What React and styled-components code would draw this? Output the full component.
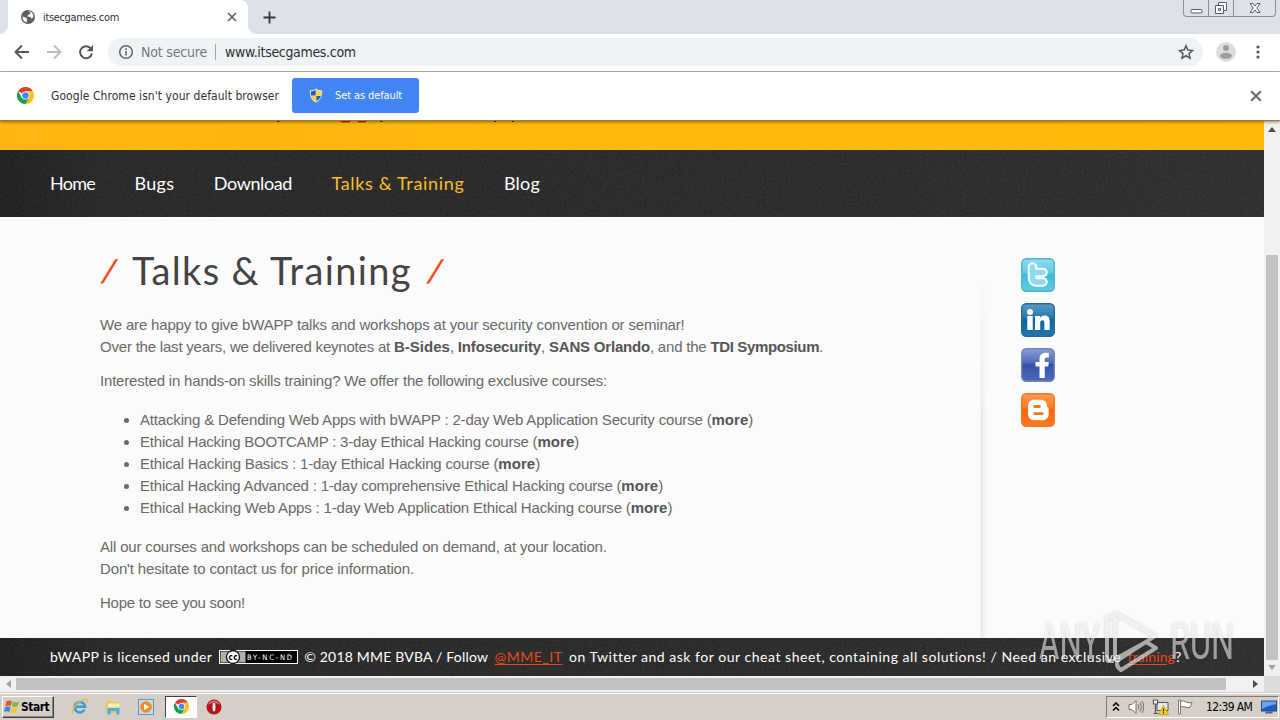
import React from 'react';
import styled, { createGlobalStyle } from 'styled-components';

const Global = createGlobalStyle`
  * { box-sizing: border-box; }
  body { margin: 0; overflow: hidden; font-family: 'Liberation Sans', sans-serif; }
  svg { display: block; flex: none; }
`;

const ui = `'DejaVu Sans Condensed', 'DejaVu Sans', sans-serif`;
const hand = `Lato, sans-serif`;

const Desktop = styled.div`
  width: 1280px;
  height: 720px;
  display: flex;
  flex-direction: column;
  overflow: hidden;
  background: #fff;
`;

/* ---------- browser chrome ---------- */
const TabStrip = styled.div`
  height: 34px;
  flex: none;
  display: flex;
  align-items: flex-start;
  background: #dee1e8;
  padding-left: 8px;
`;
const Tab = styled.div`
  position: relative;
  width: 240px;
  height: 34px;
  padding: 0 11px 0 13px;
  display: flex;
  align-items: center;
  background: #fff;
  border-radius: 0 8px 0 0;
  &::before, &::after {
    content: '';
    position: absolute;
    bottom: 0;
    width: 8px;
    height: 8px;
  }
  &::before { left: -8px; background: radial-gradient(circle at 0 0, transparent 7.5px, #fff 8px); }
  &::after { right: -8px; background: radial-gradient(circle at 100% 0, transparent 7.5px, #fff 8px); }
`;
const UiText = styled.span`
  font-family: ${ui};
  font-size: ${p => p.$size}px;
  letter-spacing: ${p => p.$track || 0}px;
  color: ${p => p.$color || '#333'};
  font-weight: ${p => (p.$bold ? 700 : 400)};
  white-space: nowrap;
`;
const TabTitle = styled(UiText)`
  flex: 1;
  margin-left: 8px;
`;
const NewTab = styled.div`
  height: 34px;
  margin-left: 15px;
  display: flex;
  align-items: center;
`;
const WindowButtons = styled.div`
  display: flex;
  height: 17px;
  margin-left: auto;
  margin-right: 4px;
  border: 1px solid #8b8f9b;
  border-top: 0;
  border-radius: 0 0 4px 4px;
`;
const WindowButton = styled.div`
  width: ${p => p.$w}px;
  display: flex;
  align-items: center;
  justify-content: center;
  & + & { border-left: 1px solid #8b8f9b; }
`;
const Toolbar = styled.div`
  height: 38px;
  flex: none;
  display: flex;
  align-items: center;
  padding: 0 14px 2px;
  border-bottom: 1px solid #b3b5b5;
`;
const NavIcons = styled.div`
  width: 94px;
  display: flex;
  gap: 16px;
`;
const Omnibox = styled.div`
  width: 1095px;
  height: 28px;
  border-radius: 14px;
  background: #f0f3f6;
  display: flex;
  align-items: center;
  padding: 0 9px 0 10px;
`;
const Status = styled.div`
  margin-left: 7px;
  padding-right: 8px;
  width: 75px;
  height: 16px;
  line-height: 15px;
  border-right: 1px solid #a0a3a7;
  margin-right: 9px;
`;
const Spacer = styled.div`flex: 1;`;
const Actions = styled.div`
  display: flex;
  align-items: center;
  gap: 18px;
  margin-left: 13px;
`;
const InfoBar = styled.div`
  position: relative;
  z-index: 1;
  height: 49px;
  flex: none;
  display: flex;
  align-items: center;
  padding: 0 18px 1px 17px;
  background: #fff;
  border-bottom: 1px solid #a07c2e;
  box-shadow: 0 1px 3px rgba(0, 0, 0, .45);
`;
const InfoMessage = styled(UiText)`
  width: 241px;
  margin-left: 17px;
`;
const DefaultButton = styled.div`
  width: 127px;
  height: 35px;
  border-radius: 3px;
  background: #4285f4;
  display: flex;
  align-items: center;
  padding-left: 17px;
  gap: 12px;
`;

/* ---------- web page ---------- */
const Viewport = styled.div`
  height: 571px;
  flex: none;
  display: grid;
  grid-template-columns: 1264px 16px;
  grid-template-rows: 555px 16px;
`;
const Page = styled.div`
  display: flex;
  flex-direction: column;
  overflow: hidden;
  background: #fbfbfb;
`;
const Banner = styled.div`
  height: 29px;
  flex: none;
  background: linear-gradient(90deg, #ffb612, #ffb80d 45%, #ffba0b);
  padding-left: 277px;
`;
const Dark = styled.div`
  position: relative;
  flex: none;
  display: flex;
  align-items: center;
  padding: 0 0 2px 50px;
  height: ${p => p.$h}px;
  gap: ${p => p.$gap}px;
  background: linear-gradient(90deg, #1b1b1b, #242424 8%, #262626 60%, #2b2b2b);
  font-family: ${hand};
  font-size: ${p => p.$size}px;
  color: #fff;
  white-space: nowrap;
`;
const GrainLayer = styled.svg`
  position: absolute;
  inset: 0;
  width: 100%;
  height: 100%;
  opacity: .1;
`;
const HandText = styled.span`
  position: relative;
  letter-spacing: ${p => p.$track}px;
  color: ${p => p.$color || '#fff'};
`;
const HandLink = styled(HandText)`
  text-decoration: underline;
  text-underline-offset: 2px;
`;
const Main = styled.div`
  height: 421px;
  flex: none;
  display: flex;
  padding-left: 100px;
`;
const Article = styled.div`
  width: 880px;
  padding-top: 26px;
  font-size: 15px;
  line-height: 22px;
  color: #6a6a6a;
`;
const Title = styled.h1`
  margin: 0 0 17px;
  height: 54px;
  display: flex;
  align-items: center;
  font: 400 38px/54px ${hand};
  letter-spacing: 1.36px;
  color: #444;
`;
const Slash = styled.span`
  width: 32px;
  font-size: 31px;
  line-height: 50px;
  letter-spacing: 0;
  color: #f8410c;
  transform: skewX(-12deg);
  transform-origin: 0 75%;
  -webkit-text-stroke: .4px #f8410c;
`;
const EndSlash = styled(Slash)`margin-left: 14px;`;
const Paragraph = styled.div`
  margin-bottom: 12px;
`;
const Line = styled.div`
  letter-spacing: ${p => p.$track}px;
  white-space: nowrap;
`;
const Strong = styled.b`
  color: #555;
  letter-spacing: ${p => p.$track || 0}px;
`;
const Courses = styled.ul`
  margin: 17px 0;
  padding-left: 40px;
`;
const Course = styled.li`
  letter-spacing: ${p => p.$track}px;
  white-space: nowrap;
`;
const Divider = styled.div`
  width: 9px;
  margin-top: 60px;
  background: linear-gradient(90deg, #fbfbfb, #e7e7e7 12%, #f4f4f4 50%, #fbfbfb);
  mask-image: linear-gradient(transparent, #000 40%);
`;
const Social = styled.div`
  margin-left: 32px;
  padding-top: 41px;
  display: flex;
  flex-direction: column;
  gap: 11px;
`;

/* ---------- scrollbars ---------- */
const VScroll = styled.div`
  background: #f1f1f1;
  display: flex;
  flex-direction: column;
  align-items: center;
  justify-content: space-between;
  padding: 6px 0 6px;
`;
const VThumb = styled.div`
  width: 12px;
  height: 405px;
  margin-top: auto;
  margin-bottom: 5px;
  background: #c1c1c1;
`;
const HScroll = styled.div`
  background: #f1f1f1;
  display: flex;
  align-items: center;
  padding: 0 6px;
  justify-content: space-between;
`;
const HThumb = styled.div`
  width: 1210px;
  height: 12px;
  margin-left: 5px;
  margin-right: auto;
  background: #c1c1c1;
`;
const Corner = styled.div`background: #dcdcdc;`;

/* ---------- taskbar ---------- */
const Taskbar = styled.div`
  flex: 1;
  display: flex;
  align-items: center;
  padding: 1px 1px 1px 2px;
  background: #d5cfc7;
  border-top: 1px solid #d5cfc7;
  box-shadow: inset 0 1px 0 #fff;
`;
const StartButton = styled.div`
  width: 52px;
  height: 22px;
  display: flex;
  align-items: center;
  gap: 1px;
  padding-left: 1px;
  border: 1px solid;
  border-color: #fff #404040 #404040 #fff;
  box-shadow: inset -1px -1px 0 #8a857d;
`;
const QuickLaunch = styled.div`
  display: flex;
  align-items: center;
  gap: 17px;
  margin-left: 17px;
`;
const ActiveTask = styled.div`
  width: 32px;
  height: 22px;
  margin: 0 9px 0 11px;
  display: flex;
  align-items: center;
  justify-content: center;
  background: #fff;
  border: 1px solid;
  border-color: #404040 #fff #fff #404040;
`;
const Tray = styled.div`
  width: 173px;
  height: 22px;
  margin-left: auto;
  display: flex;
  align-items: center;
  padding: 0 1px 0 5px;
  border: 1px solid;
  border-color: #807c76 #fff #fff #807c76;
`;
const TrayIcons = styled.div`
  display: flex;
  align-items: center;
  gap: 8px;
  width: 94px;
`;
const Watermark = styled.svg`
  position: absolute;
  left: 1034px;
  top: 603px;
  z-index: 3;
  filter: drop-shadow(0 0 1.5px rgba(0, 0, 0, .3));
`;

const Grain = ({ id }) => (
  <GrainLayer aria-hidden="true">
    <filter id={id}>
      <feTurbulence type="fractalNoise" baseFrequency="0.45" numOctaves="2" />
      <feColorMatrix type="saturate" values="0" />
    </filter>
    <rect width="100%" height="100%" filter={`url(#${id})`} />
  </GrainLayer>
);

const Cross = ({ size = 10, color = '#5f6368' }) => (
  <svg width={size} height={size} viewBox="0 0 10 10" stroke={color} strokeWidth="1.7">
    <path d="M1 1l8 8M9 1L1 9" />
  </svg>
);

const ChromeLogo = ({ size }) => (
  <svg width={size} height={size} viewBox="0 0 48 48">
    <path d="M24 24L3.2 12A24 24 0 0 1 44.8 12H24z" fill="#e33b2e" />
    <path d="M44.8 12A24 24 0 0 1 24 48L34.4 30 24 12z" fill="#fbc116" />
    <path d="M3.2 12A24 24 0 0 0 24 48L34.4 30H13.6z" fill="#1a9c50" />
    <circle cx="24" cy="24" r="11.5" fill="#fff" />
    <circle cx="24" cy="24" r="9" fill="#4386f5" />
  </svg>
);

const Globe = () => (
  <svg width="14" height="14" viewBox="0 0 14 14">
    <circle cx="7" cy="7" r="7" fill="#5c6064" />
    <path d="M1.6 6.6l3 .8 1.500 1.600-.5 3.400A5.600 5.600 0 0 1 1.600 6.600zM6.300 1.400L9.400 2 9 4.100 7.200 4.800 6.300 6.400l3.300.5 1.200 2.200 1.200-2 .5-.6A5.600 5.600 0 0 0 8.600 1.300z" fill="#fff" />
  </svg>
);

const Shield = () => (
  <svg width="14" height="15" viewBox="0 0 14 15">
    <path d="M7 .5C5 2 3 2.200.8 2.200c0 6 1 9.600 6.200 12.200 5.200-2.600 6.200-6.200 6.200-12.200C11 2.200 9 2 7 .5z" fill="#e8e4c8" />
    <path d="M6.700 2C5 3 3.500 3.200 2 3.300V7.500h4.700z" fill="#1f5dbd" />
    <path d="M7.300 2C9 3 10.500 3.200 12 3.300V7.500H7.300z" fill="#f8d428" />
    <path d="M2.200 8h4.500v5C4.200 11.800 2.700 10 2.200 8z" fill="#f8d428" />
    <path d="M11.800 8H7.300v5c2.500-1.200 4-3 4.500-5z" fill="#1f5dbd" />
  </svg>
);

const Tile = ({ id, top, mid, bottom, edge, children }) => (
  <svg width="34" height="34" viewBox="0 0 34 34">
    <defs>
      <linearGradient id={id} x1="0" y1="0" x2="0" y2="1">
        <stop offset="0" stopColor={top} />
        <stop offset=".45" stopColor={mid} />
        <stop offset=".46" stopColor={bottom} />
        <stop offset="1" stopColor={mid} />
      </linearGradient>
    </defs>
    <rect x=".7" y=".7" width="32.600" height="32.600" rx="4.500" fill={`url(#${id})`} stroke={edge} strokeWidth="1.400" />
    {children}
  </svg>
);

const SocialLinks = () => (
  <Social>
    <Tile id="tw" top="#8fdcec" mid="#62cbe2" bottom="#3bbbdb" edge="#4fb6cb">
      <path d="M11.500 9v10.500q0 4.500 4.500 4.500h6M11.500 14.500H22" fill="none" stroke="#fff" strokeWidth="9.500" strokeLinecap="round" strokeLinejoin="round" />
      <path d="M11.500 9v10.500q0 4.500 4.500 4.500h6M11.500 14.500H22" fill="none" stroke="#8edaf0" strokeWidth="5.600" strokeLinecap="round" strokeLinejoin="round" />
    </Tile>
    <Tile id="li" top="#5d9dc4" mid="#2277ae" bottom="#0c659f" edge="#256a96">
      <g fill="#fff">
        <circle cx="9" cy="9" r="3" />
        <path d="M6.300 13h5.400V27H6.300zM14 13h5v1.900c1-1.500 2.500-2.300 4.500-2.300 3.800 0 5.200 2.300 5.200 6V27h-5.300v-7c0-1.700-.6-2.700-2-2.700-1.500 0-2.200 1.100-2.200 2.900V27H14z" />
      </g>
    </Tile>
    <Tile id="fb" top="#8c9fd6" mid="#4e68b8" bottom="#3551a8" edge="#7186c0">
      <path d="M18.500 30V18.500h-4V14h4v-2.500c0-4.500 2.200-6.700 6.300-6.700h3v4.700h-2c-1.600 0-2 .7-2 2.200V14h4l-.6 4.500h-3.400V30z" fill="#fff" />
    </Tile>
    <Tile id="bl" top="#ff9a4e" mid="#fb7a24" bottom="#fc6605" edge="#f57722">
      <path d="M13.500 6.800h6c4 0 6.500 2.500 6.500 6.200 0 1.300.7 1.500 1.200 1.800.4.300.5.700.5 1.300v4.700c0 4-2.700 6.500-6.500 6.500h-7.700C9.500 27.300 7 24.800 7 21v-7.800c0-4 2.500-6.400 6.500-6.400z" fill="#fff" />
      <path d="M13.700 13.500h4.800M13.700 20.600h7.600" stroke="#f9741b" strokeWidth="2.800" strokeLinecap="round" />
    </Tile>
  </Social>
);

const Badge = styled.svg`
  position: relative;
  font-family: ${ui};
`;
const CreativeCommons = () => (
  <Badge width="79" height="15" viewBox="0 0 79 15">
    <rect x=".5" y="1.500" width="78" height="13" fill="#000" stroke="#fff" />
    <rect x="1.500" y="2.500" width="25" height="11" fill="#aeb3a9" />
    <circle cx="14" cy="8" r="6.500" fill="#fff" stroke="#111" strokeWidth="1.300" />
    <text x="9.600" y="10.700" fontSize="8" fontWeight="700" textLength="9">cc</text>
    <text x="28" y="11" fontSize="7.500" fill="#fff" textLength="45">BY-NC-ND</text>
  </Badge>
);

const nav = [
  ['Home', -0.75],
  ['Bugs', 0.3],
  ['Download', -0.4],
  ['Talks & Training', 0.67, '#f9bd2c'],
  ['Blog', 0.2],
];

const courses = [
  ['Attacking & Defending Web Apps with bWAPP : 2-day Web Application Security course (', -0.17],
  ['Ethical Hacking BOOTCAMP : 3-day Ethical Hacking course (', -0.204],
  ['Ethical Hacking Basics : 1-day Ethical Hacking course (', -0.17],
  ['Ethical Hacking Advanced : 1-day comprehensive Ethical Hacking course (', -0.196],
  ['Ethical Hacking Web Apps : 1-day Web Application Ethical Hacking course (', -0.17],
];

function BrowserChrome() {
  return (
    <>
      <TabStrip>
        <Tab>
          <Globe />
          <TabTitle $size={11} $track={-0.35}>itsecgames.com</TabTitle>
          <Cross size={10} />
        </Tab>
        <NewTab>
          <svg width="13" height="13" viewBox="0 0 13 13" stroke="#33363b" strokeWidth="1.800"><path d="M6.500.5v12M.5 6.500h12" /></svg>
        </NewTab>
        <WindowButtons>
          <WindowButton $w={24}>
            <svg width="13" height="15" viewBox="0 0 13 15"><rect x="1" y="8.500" width="11" height="3.500" rx="1" fill="#fff" stroke="#555b68" /></svg>
          </WindowButton>
          <WindowButton $w={25}>
            <svg width="14" height="14" viewBox="0 0 14 14" fill="#fff" stroke="#555b68">
              <path d="M4.500 1.500h8v8h-8z" /><path d="M1.500 4.500h8v8h-8z" /><path d="M4.500 7.500h2v2h-2z" />
            </svg>
          </WindowButton>
          <WindowButton $w={42}>
            <svg width="12" height="12" viewBox="0 0 12 12"><path d="M1 1.500h3L6 4l2-2.500h3L7.800 6l3.200 4.500H8L6 8l-2 2.500H1L4.200 6z" fill="#fff" stroke="#555b68" /></svg>
          </WindowButton>
        </WindowButtons>
      </TabStrip>
      <Toolbar>
        <NavIcons>
          <svg width="16" height="16" viewBox="0 0 16 16" fill="none" stroke="#55595e" strokeWidth="2"><path d="M15 8H2M8 1.500L1.500 8 8 14.500" /></svg>
          <svg width="16" height="16" viewBox="0 0 16 16" fill="none" stroke="#bbbdbf" strokeWidth="1.800"><path d="M1 8h13M8 1.500L14.500 8 8 14.500" /></svg>
          <svg width="16" height="16" viewBox="0 0 16 16"><path d="M13.200 5A6 6 0 1 0 14 9.500" fill="none" stroke="#55595e" strokeWidth="2" /><path d="M15 1v6.300H8.700z" fill="#55595e" /></svg>
        </NavIcons>
        <Omnibox>
          <svg width="16" height="16" viewBox="0 0 16 16"><circle cx="8" cy="8" r="6.300" fill="none" stroke="#5f6368" strokeWidth="1.500" /><path d="M8 7v4.500M8 4.300V6" stroke="#5f6368" strokeWidth="1.600" /></svg>
          <Status><UiText $size={14} $track={-0.19} $color="#74787c">Not secure</UiText></Status>
          <UiText $size={14} $track={-0.32} $color="#2d2f32">www.itsecgames.com</UiText>
          <Spacer />
          <svg width="16" height="16" viewBox="0 0 24 24" fill="none" stroke="#55595e" strokeWidth="2.300"><path d="M12 2.800l2.800 6.400 7 .6-5.300 4.600 1.600 6.800-6.100-3.600-6.100 3.600 1.600-6.800L2.200 9.800l7-.6z" /></svg>
        </Omnibox>
        <Actions>
          <svg width="20" height="20" viewBox="0 0 20 20"><circle cx="10" cy="10" r="10" fill="#dddddf" /><circle cx="10" cy="6" r="3" fill="#9c9da0" /><ellipse cx="10" cy="13.800" rx="6" ry="3" fill="#9c9da0" /></svg>
          <svg width="8" height="16" viewBox="0 0 8 16" fill="#55595e"><circle cx="4" cy="3" r="1.600" /><circle cx="4" cy="8" r="1.600" /><circle cx="4" cy="13" r="1.600" /></svg>
        </Actions>
      </Toolbar>
      <InfoBar>
        <ChromeLogo size={17} />
        <InfoMessage $size={12} $track={0.06}>Google Chrome isn't your default browser</InfoMessage>
        <DefaultButton>
          <Shield />
          <UiText $size={11} $track={-0.11} $color="#fff">Set as default</UiText>
        </DefaultButton>
        <Spacer />
        <Cross size={12} color="#6a6a6a" />
      </InfoBar>
    </>
  );
}

function TalksPage() {
  return (
    <Page>
      <Banner>
        <svg width="240" height="3" viewBox="0 0 240 3">
          <path d="M0 0h3l-1 1H0zM103 0h3l-1 1h-2zM217 0h2v1h-2zM235 0h2v1h-2z" fill="#5b3b06" />
          <path d="M63 0h11l-2 1.500h-7zM80 0h10l-2 1.500h-6z" fill="#d42c10" />
        </svg>
      </Banner>
      <Dark $h={67} $gap={39.500} $size={18}>
        <Grain id="grain-nav" />
        {nav.map(([label, track, color]) => (
          <HandText key={label} $track={track} $color={color}>{label}</HandText>
        ))}
      </Dark>
      <Main>
        <Article>
          <Title><Slash>/</Slash>Talks &amp; Training<EndSlash>/</EndSlash></Title>
          <Paragraph>
            <Line $track={-0.17}>We are happy to give bWAPP talks and workshops at your security convention or seminar!</Line>
            <Line $track={-0.206}>
              Over the last years, we delivered keynotes at <Strong>B-Sides</Strong>, <Strong $track={-0.15}>Infosecurity</Strong>, <Strong $track={-0.2}>SANS Orlando</Strong>, and the <Strong $track={-0.36}>TDI Symposium</Strong>.
            </Line>
          </Paragraph>
          <Line $track={-0.188}>Interested in hands-on skills training? We offer the following exclusive courses:</Line>
          <Courses>
            {courses.map(([text, track]) => (
              <Course key={text} $track={track}>{text}<Strong $track={0.05}>more</Strong>)</Course>
            ))}
          </Courses>
          <Paragraph>
            <Line $track={-0.17}>All our courses and workshops can be scheduled on demand, at your location.</Line>
            <Line $track={-0.144}>Don't hesitate to contact us for price information.</Line>
          </Paragraph>
          <Line $track={-0.243}>Hope to see you soon!</Line>
        </Article>
        <Divider />
        <SocialLinks />
      </Main>
      <Dark $h={38} $gap={6.400} $size={14}>
        <Grain id="grain-foot" />
        <HandText $track={0.42}>bWAPP is licensed under</HandText>
        <CreativeCommons />
        <HandText $track={0.19}>© 2018 MME BVBA / Follow</HandText>
        <HandLink $track={0.51} $color="#e8481c">@MME_IT</HandLink>
        <HandText $track={0.537}>on Twitter and ask for our cheat sheet, containing all solutions! / Need an exclusive</HandText>
        <HandText $track={0}><HandLink $track={0.1} $color="#e8481c">training</HandLink>?</HandText>
      </Dark>
    </Page>
  );
}

function WindowsTaskbar() {
  return (
    <Taskbar>
      <StartButton>
        <svg width="16" height="16" viewBox="0 0 16 16">
          <path d="M2.500 2.500Q5 .8 8 2.200L6.800 7Q4 5.800 1.200 7.300z" fill="#e2572b" />
          <path d="M9 2.600q3 1.400 6-.2l-1.300 4.900q-3 1.400-5.800 0z" fill="#7fb83c" />
          <path d="M1 8.300q2.800-1.500 5.500-.2L5.300 13Q2.500 11.700 0 13z" fill="#3f83d6" />
          <path d="M7.600 8.500q3 1.300 5.800 0l-1.300 4.800q-3 1.500-5.700 0z" fill="#f6c52e" />
        </svg>
        <UiText $size={12} $bold $track={-0.5} $color="#000">Start</UiText>
      </StartButton>
      <QuickLaunch>
        <svg width="17" height="17" viewBox="0 0 17 17" fill="none">
          <path d="M13.500 11.500A5.200 5.200 0 1 1 14 8.800H5" stroke="#3b9bdc" strokeWidth="2.600" />
          <path d="M2 15.500C-.5 13 5 3.500 14.500 1.200c2-.3 2 1.800.8 3.600" stroke="#e8bd3b" strokeWidth="1.300" />
        </svg>
        <svg width="16" height="16" viewBox="0 0 16 16">
          <path d="M1 1.500h5l1 1.500h7V14H1z" fill="#e6c75f" />
          <path d="M3 4.500h11.500v4H3z" fill="#f9eeb3" />
          <path d="M2.500 15.500V9h12v6.500h-3.200V12H5.800v3.500z" fill="#58abd8" />
        </svg>
        <svg width="16" height="16" viewBox="0 0 16 16">
          <rect x=".5" y=".5" width="15" height="15" fill="#c3ddf3" stroke="#5b94ca" />
          <circle cx="8" cy="8" r="5.800" fill="#f58a16" />
          <path d="M6 4.800v6.400L11.300 8z" fill="#fff" />
        </svg>
      </QuickLaunch>
      <ActiveTask><ChromeLogo size={15} /></ActiveTask>
      <svg width="16" height="16" viewBox="0 0 16 16">
        <circle cx="8" cy="8" r="7.500" fill="#b71218" />
        <path d="M2 5.500a6.500 6.500 0 0 1 12 0Q8 2.500 2 5.500z" fill="#e0656a" />
        <ellipse cx="8" cy="8" rx="2" ry="5" fill="#f3e9e9" stroke="#7c0a10" strokeWidth=".7" />
      </svg>
      <Tray>
        <TrayIcons>
          <svg width="8" height="10" viewBox="0 0 8 10" fill="none" stroke="#000" strokeWidth="1.500"><path d="M1 4l3-3 3 3M1 8.500l3-3 3 3" /></svg>
          <svg width="16" height="16" viewBox="0 0 16 16" fill="none" stroke="#76736f">
            <path d="M1 5.500h3l4-4v13l-4-4H1z" fill="#fff" /><path d="M10 5.500q1.500 2.500 0 5M12 3.500q3 4.500 0 9M14 2q3.500 6 0 12" />
          </svg>
          <svg width="17" height="16" viewBox="0 0 17 16">
            <path d="M5 3.500h11v8H5z" fill="#e8e8e8" stroke="#555" />
            <path d="M1.500 1h4v4h-4zM3.500 5v10M1.500 14.500h5" fill="#fff" stroke="#555" strokeWidth="1.200" />
            <path d="M11.500 6.500l5 9h-10z" fill="#f8d31b" stroke="#b79300" strokeWidth=".7" />
            <path d="M11.500 9.500v3M11.500 13.300v1.200" stroke="#222" strokeWidth="1.200" />
          </svg>
          <svg width="16" height="16" viewBox="0 0 16 16" fill="#fff" stroke="#77736e">
            <path d="M1.500 1h2v14h-2z" /><path d="M3.500 2.500q3-1.500 5.500.5 2.500 1.500 6 .5l-2 5q-3 .8-5-.5-2-1-4.500 0z" />
          </svg>
        </TrayIcons>
        <UiText $size={12} $track={-0.62} $color="#000">12:39 AM</UiText>
        <Spacer />
        <svg width="16" height="14" viewBox="0 0 16 14">
          <rect x=".5" y="1" width="15" height="10" fill="#1f5fc4" stroke="#294a80" />
          <path d="M1 1.500h14v3Q8 5 1 9z" fill="#6aa6ef" />
          <path d="M5 11.500h6l1 2H4z" fill="#45658e" />
        </svg>
      </Tray>
    </Taskbar>
  );
}

export default function App() {
  return (
    <Desktop>
      <Global />
      <BrowserChrome />
      <Viewport>
        <TalksPage />
        <VScroll>
          <svg width="8" height="5" viewBox="0 0 8 5"><path d="M4 0l4 5H0z" fill="#505050" /></svg>
          <VThumb />
          <svg width="8" height="5" viewBox="0 0 8 5"><path d="M4 5L0 0h8z" fill="#a3a3a3" /></svg>
        </VScroll>
        <HScroll>
          <svg width="5" height="8" viewBox="0 0 5 8"><path d="M0 4l5-4v8z" fill="#a3a3a3" /></svg>
          <HThumb />
          <svg width="5" height="8" viewBox="0 0 5 8"><path d="M5 4L0 8V0z" fill="#505050" /></svg>
        </HScroll>
        <Corner />
      </Viewport>
      <WindowsTaskbar />
      <Watermark width="204" height="74" viewBox="0 0 204 74" fill="#fff" fillOpacity=".55">
        <g fontFamily="Roboto, sans-serif" fontSize="50">
          <text x="5" y="56" textLength="61" lengthAdjust="spacingAndGlyphs">ANY</text>
          <text x="136" y="56" textLength="64" lengthAdjust="spacingAndGlyphs">RUN</text>
        </g>
        <g fill="none" stroke="#fff" strokeOpacity=".6" strokeWidth="4" strokeLinejoin="round">
          <path d="M80 14h-5q-2 0-2 2v40q0 2 2 2h5" />
          <path d="M81 56V10l40 23-37 24M81 56l31-17 10 6-35 22q-6-4-3-10z" />
        </g>
      </Watermark>
    </Desktop>
  );
}
